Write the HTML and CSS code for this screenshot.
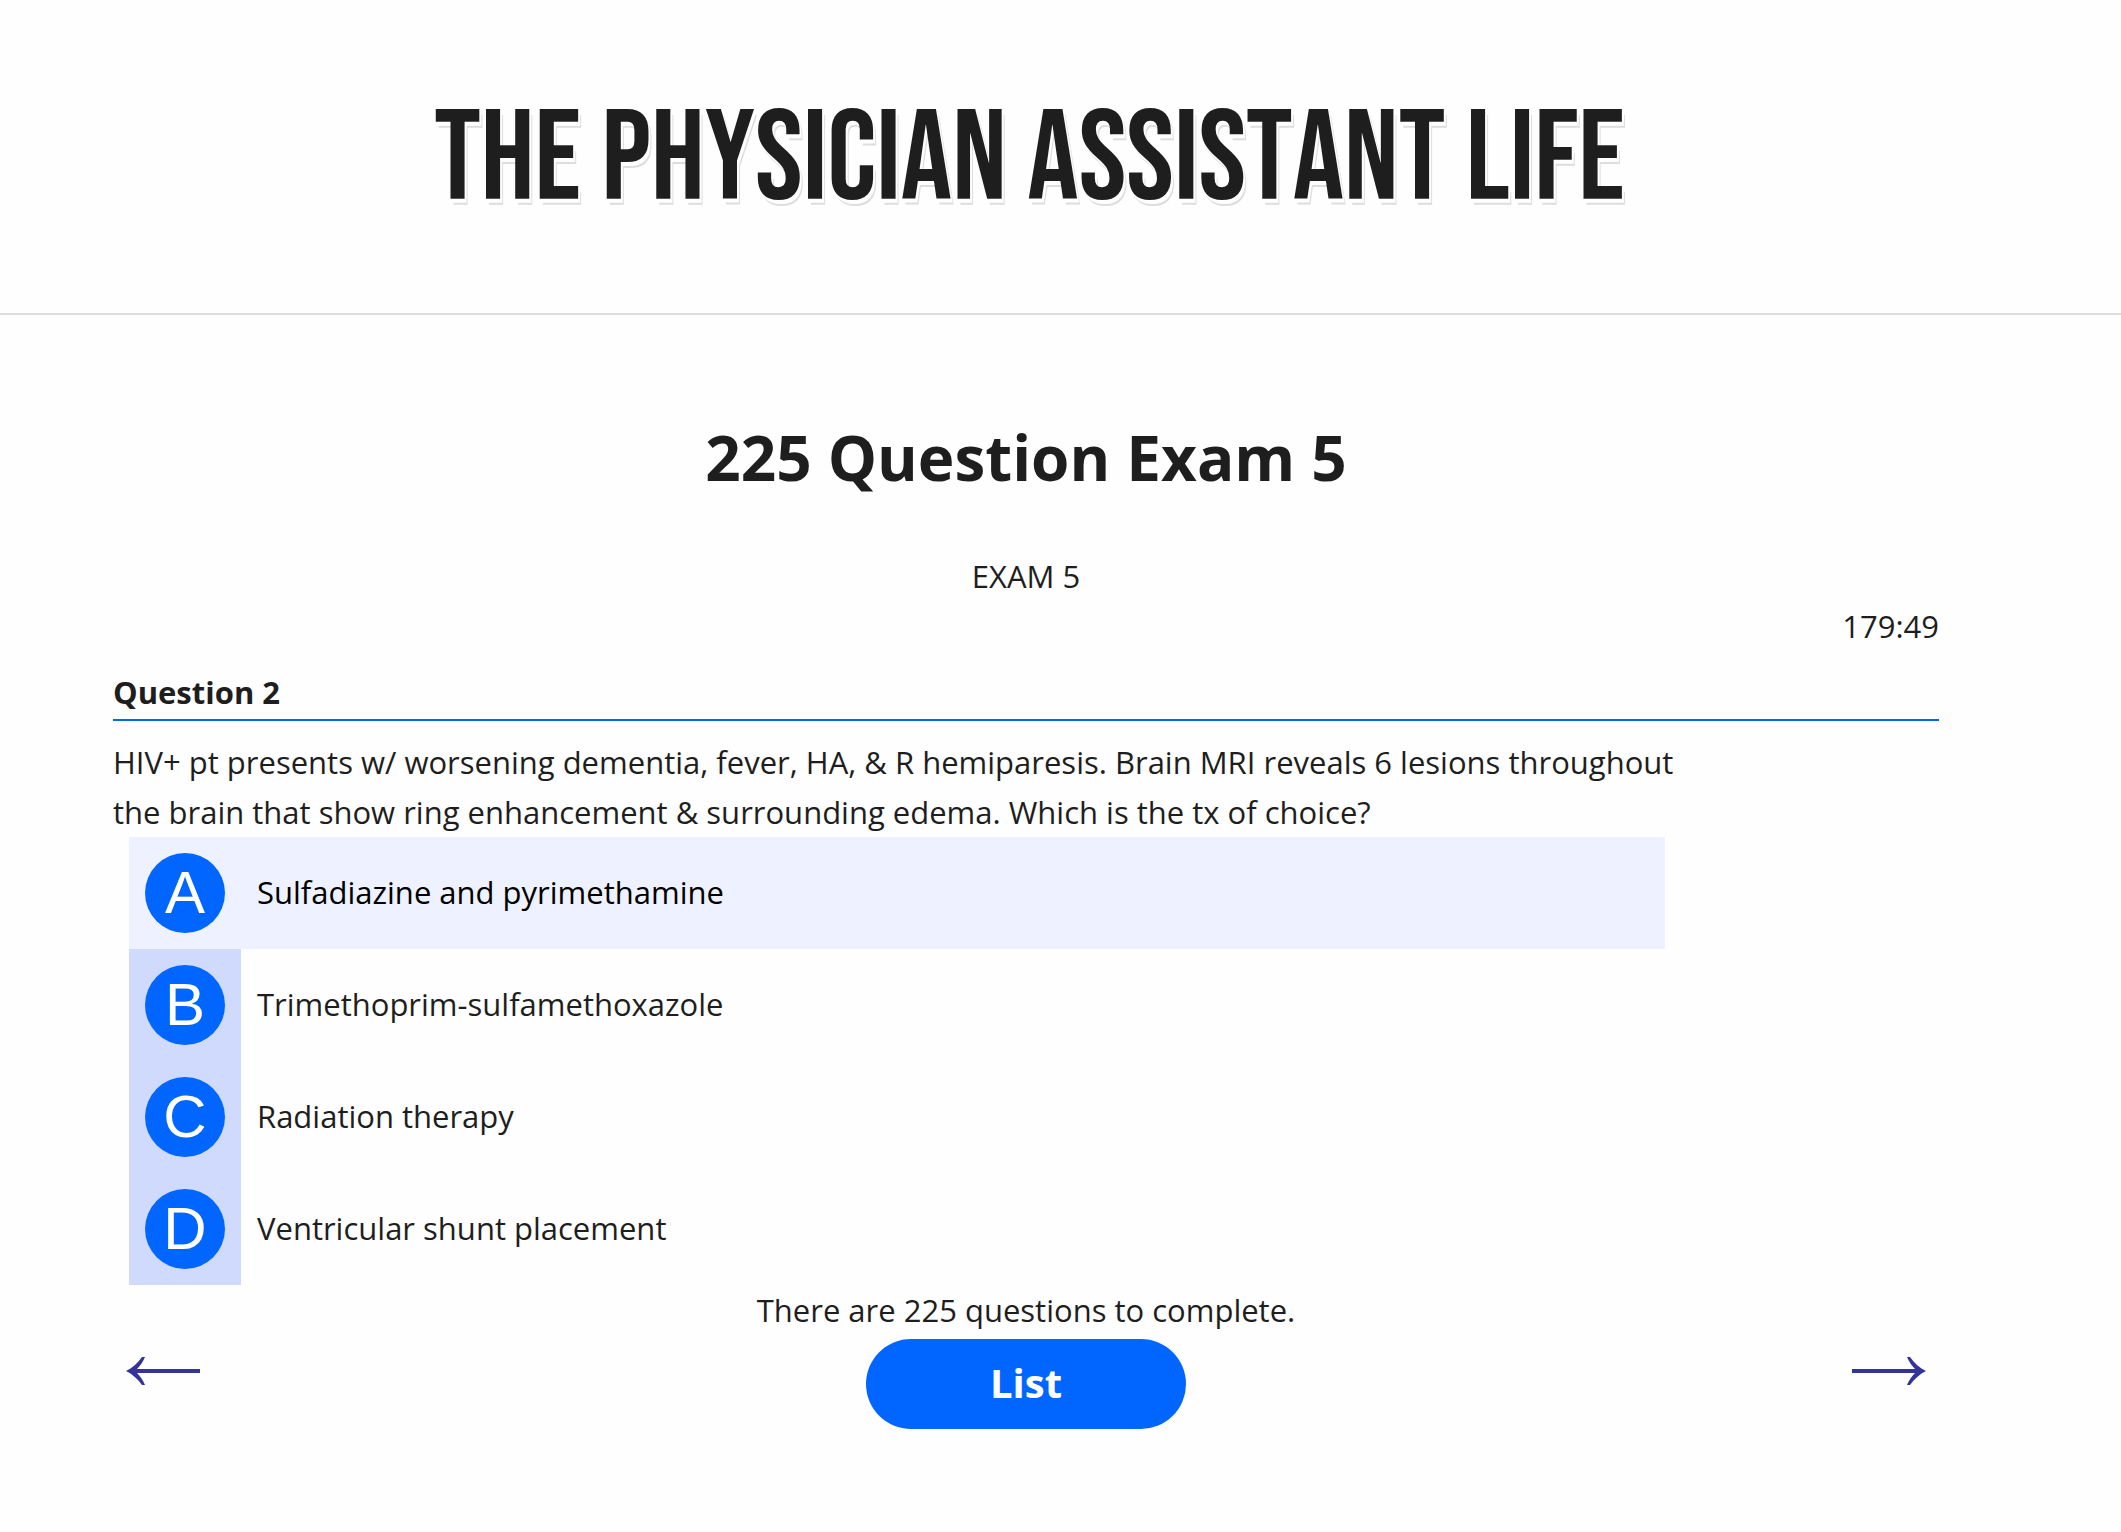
FILE: index.html
```html
<!DOCTYPE html>
<html lang="en">
<head>
    <meta charset="UTF-8">
    <meta name="viewport" content="width=device-width, initial-scale=1.0">
    <title>225 Question Exam 5</title>
    <link rel="stylesheet" href="styles.css">
</head>
<body>
    <header class="site-header">
        <div class="site-title">THE PHYSICIAN ASSISTANT LIFE</div>
    </header>

    <main class="exam">
        <h1>225 Question Exam 5</h1>
        <p class="exam-name">EXAM 5</p>
        <div class="timer">179:49</div>

        <h2>Question 2</h2>
        <p class="question-text" id="question-text">HIV+ pt presents w/ worsening dementia, fever, HA, &amp; R hemiparesis. Brain MRI reveals 6 lesions throughout the brain that show ring enhancement &amp; surrounding edema. Which is the tx of choice?</p>
        <div class="answers" role="radiogroup" aria-labelledby="question-text">
            <label class="answer active" for="answer-a">
                <input type="radio" name="answer" id="answer-a">
                <span class="letter-cell"><span class="letter">A</span></span>
                <span class="answer-text">Sulfadiazine and pyrimethamine</span>
            </label>
            <label class="answer" for="answer-b">
                <input type="radio" name="answer" id="answer-b">
                <span class="letter-cell"><span class="letter">B</span></span>
                <span class="answer-text">Trimethoprim-sulfamethoxazole</span>
            </label>
            <label class="answer" for="answer-c">
                <input type="radio" name="answer" id="answer-c">
                <span class="letter-cell"><span class="letter">C</span></span>
                <span class="answer-text">Radiation therapy</span>
            </label>
            <label class="answer" for="answer-d">
                <input type="radio" name="answer" id="answer-d">
                <span class="letter-cell"><span class="letter">D</span></span>
                <span class="answer-text">Ventricular shunt placement</span>
            </label>
        </div>

        <p class="exam-count">There are 225 questions to complete.</p>
        <div class="exam-nav">
            <button class="arrow-btn" aria-label="Previous question">
                <svg width="76" height="32" viewBox="0 0 76 32">
                    <path d="M75 14H12C15 11 18 7 20 2H17C13 8 7 13 1 16C7 19 13 24 17 30H20C18 25 15 21 12 18H75Z" />
                </svg>
            </button>
            <button class="list-btn">List</button>
            <button class="arrow-btn" aria-label="Next question">
                <svg width="76" height="32" viewBox="0 0 76 32">
                    <path d="M1 14H64C61 11 58 7 56 2H59C63 8 69 13 75 16C69 19 63 24 59 30H56C58 25 61 21 64 18H1Z" />
                </svg>
            </button>
        </div>
    </main>
</body>
</html>
```
FILE: styles.css
```css
* {
    box-sizing: border-box;
}
body {
    margin: 0;
    font-family: 'Open Sans', 'Noto Sans', sans-serif;
    font-size: 31px;
    line-height: 50px;
    color: #1e1e1e;
    background-color: #fefefe;
}
h1, h2, p {
    margin: 0;
}
.site-header {
    padding: 86px 182px 77px 120px;
    border-bottom: 2px solid #ddd;
    text-align: center;
}
.site-title {
    font-family: 'Bebas Neue', 'Roboto Condensed', 'Liberation Sans Narrow', 'Liberation Sans', sans-serif;
    font-size: 128px;
    font-kerning: none;
    line-height: 150px;
    text-shadow: 2px 4px 0 #fefefe, 3px 6px 0 #ddd;
}
.exam {
    padding: 102px 182px 80px 113px;
}
h1 {
    font-size: 62px;
    line-height: 80px;
    margin-bottom: 54px;
    text-align: center;
}
.exam-name, .exam-count {
    text-align: center;
}
.timer {
    text-align: right;
}
h2 {
    font-size: 31px;
    margin: 16px 0;
    padding-bottom: 2px;
    border-bottom: 2px solid #0066ff;
}
.question-text {
    width: 87%;
}
.answers {
    width: 85%;
    padding-left: 16px;
}
.answer {
    display: flex;
    align-items: center;
    cursor: pointer;
}
.answer input {
    position: absolute;
    opacity: 0;
}
.letter-cell {
    padding: 16px;
    background-color: #d0dafd;
}
.letter {
    display: block;
    width: 80px;
    height: 80px;
    border-radius: 50%;
    background-color: #0066ff;
    color: #fff;
    font-family: 'Liberation Sans', Arial, sans-serif;
    font-size: 60px;
    line-height: 80px;
    text-align: center;
}
.answer-text {
    padding: 0 16px 2px;
}
.answer.active, .answer:hover {
    background-color: #eef1ff;
    color: #000;
}
.answer.active .letter-cell, .answer:hover .letter-cell {
    background-color: transparent;
}
.exam-nav {
    display: flex;
    justify-content: space-between;
    padding: 4px 12px;
}
button {
    border: none;
    cursor: pointer;
}
.list-btn {
    width: 320px;
    height: 90px;
    padding: 0 0 4px;
    border-radius: 45px;
    background-color: #0066ff;
    color: #fff;
    font-family: inherit;
    font-size: 40px;
    font-weight: bold;
}
.list-btn:hover {
    background-color: #0052cc;
}
.arrow-btn {
    height: 64px;
    padding: 0;
    background: none;
}
.arrow-btn svg {
    display: block;
    fill: #333399;
}
```
